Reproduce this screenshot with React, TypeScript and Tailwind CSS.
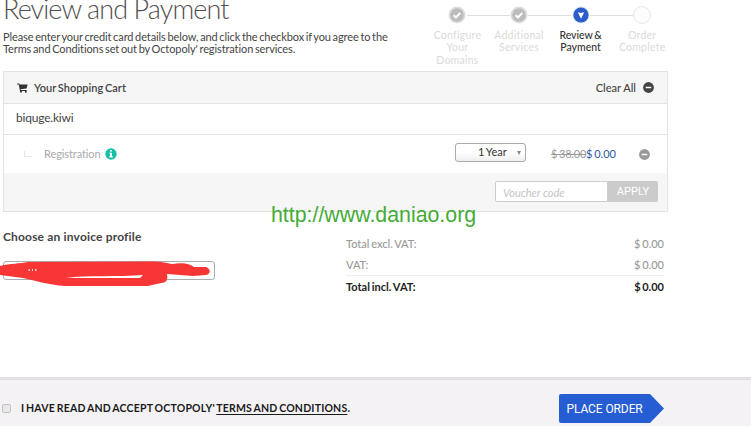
import React from "react";

const lato = "font-['Lato','Noto_Sans',sans-serif]";

function CheckDot() {
  return (
    <svg width="18" height="18" viewBox="0 0 18 18" className="block">
      <circle cx="9" cy="9" r="8.5" fill="#dedede" />
      <circle cx="9" cy="9" r="6.8" fill="#bcbcbc" />
      <path d="M5.6 9.2l2.4 2.3 4.3-4.6" fill="none" stroke="#fff" strokeWidth="2" />
    </svg>
  );
}

function ActiveDot() {
  return (
    <svg width="18" height="18" viewBox="0 0 18 18" className="block">
      <circle cx="9" cy="9" r="8.4" fill="#d5e0f4" />
      <circle cx="9" cy="9" r="7.6" fill="#2b5cc8" />
      <path d="M5.8 6.3l3.2.8 3.2-.8L9 12.7z" fill="#fff" />
    </svg>
  );
}

function EmptyDot() {
  return (
    <svg width="18" height="18" viewBox="0 0 18 18" className="block">
      <circle cx="9" cy="9" r="8.4" fill="#fdfdfd" stroke="#e6e6e6" strokeWidth="1" />
    </svg>
  );
}

function Step({ icon, lines, active, last }: { icon: React.ReactNode; lines: string[]; active?: boolean; last?: boolean }) {
  return (
    <div className="w-[61.6px] flex flex-col items-center">
      <div className="w-full h-[18px] flex items-center justify-center relative">
        {icon}
        {!last && <span className="absolute left-[40px] top-[9px] w-[43px] h-px bg-[#dedede]" />}
      </div>
      <div className={`mt-[5px] text-center text-[10.5px] leading-[12.4px] whitespace-nowrap ${active ? "text-[#333] font-medium [word-spacing:-1px]" : "text-[#dadada] tracking-[0.25px]"}`}>
        {lines.map((l) => (
          <div key={l}>{l}</div>
        ))}
      </div>
    </div>
  );
}

function Minus({ size, color }: { size: number; color: string }) {
  return (
    <svg width={size} height={size} viewBox="0 0 12 12" className="block">
      <circle cx="6" cy="6" r="5.9" fill={color} />
      <rect x="3" y="5.2" width="6" height="1.6" fill="#fff" />
    </svg>
  );
}

function Total({ label, strong }: { label: string; strong?: boolean }) {
  return (
    <div className={`flex justify-between text-[11px] leading-[21px] h-[21px] ${strong ? "text-[#222] font-bold [word-spacing:-0.8px]" : "text-[#999] font-medium [word-spacing:-1px]"}`}>
      <span>{label}</span>
      <span className="[word-spacing:-1px]">$ 0.00</span>
    </div>
  );
}

export default function App() {
  return (
    <div className={`relative w-[751px] h-[433px] overflow-hidden bg-white flex flex-col text-[#444] ${lato}`}>
      <header className="h-[71px] flex justify-between pl-[3px] pr-[78px] shrink-0">
        <div className="w-[400px]">
          <h1 className="mt-[-8px] h-[34px] text-[27px] leading-[34px] font-light text-[#505050] whitespace-nowrap tracking-[-0.9px]">Review and Payment</h1>
          <p className="mt-[5px] text-[11px] leading-[12.4px] whitespace-nowrap tracking-[-0.1px] [word-spacing:-1px]">
            Please enter your credit card details below, and click the checkbox if you agree to the
            <br />
            Terms and Conditions set out by Octopoly' registration services.
          </p>
        </div>
        <div className="flex mt-[6px]">
          <Step icon={<CheckDot />} lines={["Configure", "Your", "Domains"]} />
          <Step icon={<CheckDot />} lines={["Additional", "Services"]} />
          <Step icon={<ActiveDot />} lines={["Review &", "Payment"]} active />
          <Step icon={<EmptyDot />} lines={["Order", "Complete"]} last />
        </div>
      </header>

      <section className="ml-[3px] w-[665px] h-[141px] border border-[#e3e3e3] flex flex-col shrink-0">
        <div className="h-[32px] shrink-0 bg-[#f6f6f6] border-b border-[#e3e3e3] flex items-center pl-[13px] pr-[13px] text-[11px]">
          <svg width="11" height="10" viewBox="0 0 11 10" className="block">
            <path d="M0 .6h2.2l.4 1H10.6L9.6 5.6 3.6 6.2l.2.9h5.8v.8H3L1.7 1.5H0z" fill="#333" />
            <circle cx="4" cy="8.8" r="1" fill="#333" />
            <circle cx="8.8" cy="8.8" r="1" fill="#333" />
          </svg>
          <span className="ml-[6px] mt-[2px] font-semibold text-[#444] [word-spacing:-1px]">Your Shopping Cart</span>
          <span className="ml-auto mr-[7px] mt-[2px] font-medium text-[#444]">Clear All</span>
          <Minus size={11} color="#444" />
        </div>
        <div className="h-[31px] shrink-0 border-b border-[#e3e3e3] pl-[12px] text-[12px] leading-[28px] tracking-[-0.2px]">biquge.kiwi</div>
        <div className="h-[38px] shrink-0 flex items-center pl-[20px] pr-[17px] text-[11px]">
          <span className="w-[8px] h-[6px] border-l border-b border-[#e6e6e6]" />
          <span className="ml-[12px] w-[57px] text-[#aaa] tracking-[-0.1px]">Registration</span>
          <svg width="12" height="12" viewBox="0 0 12 12" className="ml-[4px] block">
            <circle cx="6" cy="6" r="5.7" fill="#18bfa8" />
            <path d="M5 2h2v1.6H5zM4.4 4.7H7v3.6h.8v1.2H4.3V8.3H5V5.8h-.6z" fill="#fff" />
          </svg>
          <div className="ml-auto mt-[-3px] w-[71px] h-[19px] border border-[#aaa] rounded-[3px] bg-linear-to-b from-white from-50% to-[#eee] flex items-center pl-[22px] pr-[4px] text-[11px] text-[#333]">
            <span className="[word-spacing:-1px]">1 Year</span>
            <span className="ml-auto border-x-[2.5px] border-x-transparent border-t-[4px] border-t-[#888]" />
          </div>
          <span className="ml-[25px] text-[#999] line-through whitespace-nowrap w-[35px] tracking-[-0.15px] [word-spacing:-1px]">$ 38.00</span>
          <span className="text-[#2b5a9e] whitespace-nowrap w-[29px] [word-spacing:-1px]">$ 0.00</span>
          <span className="ml-[24px]"><Minus size={11} color="#999" /></span>
        </div>
        <div className="flex-1 bg-[#f6f6f6] flex justify-end pt-[8px] pr-[9px]">
          <div className="w-[113px] h-[21px] bg-white border border-[#ccc] pl-[7px] text-[11px] leading-[22px] italic text-[#c4c4c4] rounded-l-[2px]">Voucher code</div>
          <div className="w-[50px] h-[21px] bg-[#cbcbcb] text-white text-center text-[11px] leading-[21px] rounded-r-[2px] font-['Roboto',sans-serif]">APPLY</div>
        </div>
      </section>

      <section className="flex h-[165px] shrink-0 pl-[3px]">
        <div className="w-[343px] pt-[16px]">
          <h2 className="text-[12px] leading-[18px] font-bold tracking-[0.17px]">Choose an invoice profile</h2>
          <div className="relative mt-[15px] w-[212px] h-[19px] border border-[#a9adb0] rounded-[3px]">
            <svg width="216" height="30" viewBox="0 0 216 30" className="absolute left-[-4px] top-[-2px]">
              <path d="M0 6C10 3 20 4 28 2L155 1.5C163 2 167 3 172 4C184 2 190 4 194 7H206C211 9 211 14 206 15L193 16L167 14C168 19 167 23 161 23L148 26H65C48 25 34 20 23 18L0 15z" fill="#f93636" />
              <path d="M66 18C87 15 119 17 143 15L140 18z" fill="#fff" />
              <path d="M28.5 10h1.5m2 0h1m2 0h1.5" stroke="#fff" strokeWidth="1.3" />
            </svg>
          </div>
        </div>
        <div className="w-[318px] pt-[21px]">
          <Total label="Total excl. VAT:" />
          <Total label="VAT:" />
          <div className="border-t border-[#eeeeee]"><Total label="Total incl. VAT:" strong /></div>
        </div>
      </section>

      <footer className="h-[49px] shrink-0 border-t-[3px] border-[#e2e0e6] bg-[#f5f2f6] flex pl-[2px]">
        <span className="mt-[24px] w-[9px] h-[9px] border border-[#c4c4c4] rounded-[2px] bg-[#e8e8e8]" />
        <div className="ml-[10px] mt-[20px] w-[538px] text-[10.5px] leading-[17px] font-bold text-[#1a1a1a] whitespace-nowrap tracking-[0.2px] [word-spacing:-1px]">
          I HAVE READ AND ACCEPT OCTOPOLY' <span className="underline underline-offset-2">TERMS AND CONDITIONS</span>.
        </div>
        <div className="relative mt-[14px] w-[105px] h-[29px]">
          <svg width="105" height="29" className="block"><path d="M2 0H91L105 14.5 91 29H2Q0 29 0 27V2Q0 0 2 0z" fill="#265dd2" /></svg>
          <span className="absolute left-[7.5px] top-px text-[12px] leading-[29px] text-white whitespace-nowrap tracking-[-0.1px] font-['Roboto',sans-serif]">PLACE ORDER</span>
        </div>
      </footer>

      <div className="absolute left-[271px] top-[203px] text-[21.33px] leading-[24px] text-[#43ac37] whitespace-nowrap font-['Liberation_Sans',Arial,sans-serif]">http://www.daniao.org</div>
    </div>
  );
}
